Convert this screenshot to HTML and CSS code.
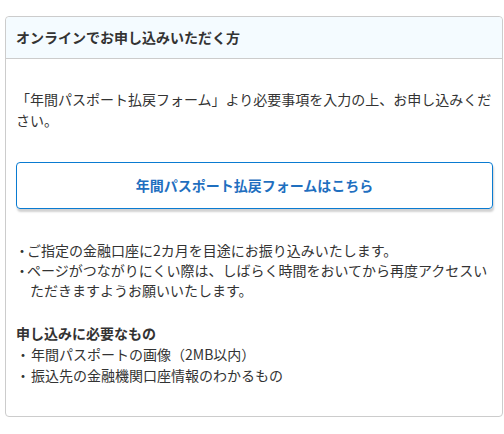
FILE: index.html
```html
<!DOCTYPE html>
<html lang="ja">
<head>
    <meta charset="UTF-8">
    <meta name="viewport" content="width=device-width, initial-scale=1.0">
    <title>年間パスポート払戻</title>
    <link rel="stylesheet" href="styles.css">
</head>
<body>

<div class="panel">
    <!-- header of the online section -->
    <div class="panel-head">オンラインでお申し込みいただく方</div>

    <div class="panel-body">
        <p class="lead">「年間パスポート払戻フォーム」より必要事項を入力の上、お申し込みください。</p>

        <a class="form-btn" href="#">年間パスポート払戻フォームはこちら</a>

        <ul class="notes">
            <li>ご指定の金融口座に2カ月を目途にお振り込みいたします。</li>
            <li>ページがつながりにくい際は、しばらく時間をおいてから再度アクセスいただきますようお願いいたします。</li>
        </ul>

        <h4 class="need-title">申し込みに必要なもの</h4>
        <ul class="need-list">
            <li>年間パスポートの画像（2MB以内）</li>
            <li>振込先の金融機関口座情報のわかるもの</li>
        </ul>
    </div>
</div>

</body>
</html>
```

FILE: styles.css
```css
body {
    font-family: "Noto Sans CJK JP", "Noto Sans", sans-serif;
    font-size: 14px;
    color: #333;
    margin: 0;
    background: #fff;
}
.panel {
    width: 498px;
    box-sizing: border-box;
    margin: 16px 0 0 5px;
    border: 1px solid #ccc;
    border-radius: 4px;
}
.panel-head {
    height: 41px;
    line-height: 40px;
    padding: 0 10px;
    background-color: #f4fbff;
    border-bottom: 1px solid #ccc;
    border-radius: 4px 4px 0 0;
    font-weight: bold;
}
.panel-body {
    padding: 30px 9px 31px 10px;
}
.lead {
    margin: 0;
    line-height: 21px;
}
.form-btn {
    display: block;
    margin-top: 31px;
    height: 47px;
    line-height: 45px;
    box-sizing: border-box;
    border: 1px solid #0a7bd1;
    border-radius: 4px;
    box-shadow: 1px 3px 2px rgba(0, 0, 0, 0.18);
    text-align: center;
    color: #1f6fbf;
    font-weight: bold;
    text-decoration: none;
}
.notes, .need-list {
    list-style: none;
    margin: 0;
    padding: 0;
}
.notes {
    margin-top: 31px;
}
.notes li {
    line-height: 20px;
    padding-left: 14px;
    text-indent: -12px;
}
.notes li::before {
    content: "・";
    display: inline-block;
    width: 12px;
    text-indent: 0;
    margin-left: -3px;
    letter-spacing: -3px;
}
.need-title {
    margin: 23px 0 0;
    font-size: 14px;
    line-height: 20px;
}
.need-list li {
    line-height: 20px;
    margin-top: 1px;
}
.need-list li::before {
    content: "・";
    margin-right: 1px;
}
```
